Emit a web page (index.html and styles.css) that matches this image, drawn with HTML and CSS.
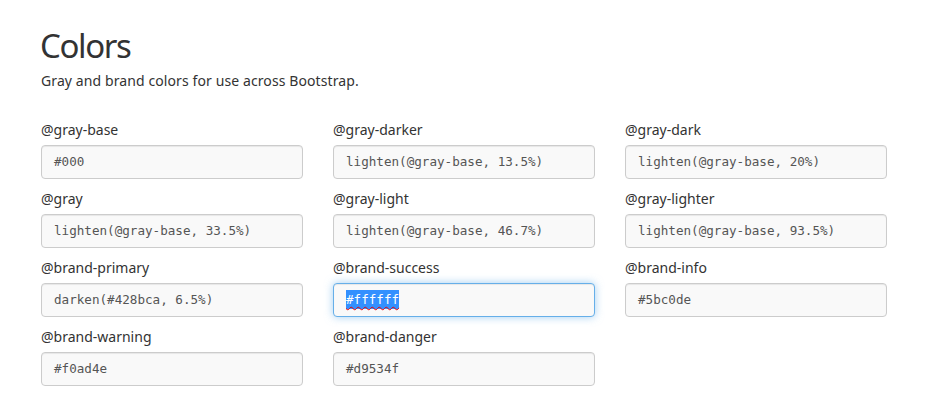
FILE: index.html
```html
<!DOCTYPE html>
<html>
<head>
<meta charset="utf-8">
<link rel="stylesheet" href="styles.css">
</head>
<body>
<div class="page">
  <h1 class="title">Colors</h1>
  <p class="lead">Gray and brand colors for use across Bootstrap.</p>
  <div class="grid">
    <div class="field"><label class="label">@gray-base</label><div class="input">#000</div></div>
    <div class="field"><label class="label">@gray-darker</label><div class="input">lighten(@gray-base, 13.5%)</div></div>
    <div class="field"><label class="label">@gray-dark</label><div class="input">lighten(@gray-base, 20%)</div></div>
    <div class="field"><label class="label">@gray</label><div class="input">lighten(@gray-base, 33.5%)</div></div>
    <div class="field"><label class="label">@gray-light</label><div class="input">lighten(@gray-base, 46.7%)</div></div>
    <div class="field"><label class="label">@gray-lighter</label><div class="input">lighten(@gray-base, 93.5%)</div></div>
    <div class="field"><label class="label">@brand-primary</label><div class="input">darken(#428bca, 6.5%)</div></div>
    <div class="field"><label class="label">@brand-success</label><div class="input focus"><span class="sel">#ffffff</span></div></div>
    <div class="field"><label class="label">@brand-info</label><div class="input">#5bc0de</div></div>
    <div class="field"><label class="label">@brand-warning</label><div class="input">#f0ad4e</div></div>
    <div class="field"><label class="label">@brand-danger</label><div class="input">#d9534f</div></div>
  </div>
</div>
</body>
</html>
```

FILE: styles.css
```css
html, body {
  margin: 0;
  padding: 0;
  background: #fff;
}
body {
  font-family: "Noto Sans", "Open Sans", sans-serif;
  color: #333;
  font-size: 14px;
  line-height: 20px;
}
.page {
  padding: 0 0 0 41px;
  width: 846px;
}
.title {
  margin: 26px 0 0 -1px;
  font-size: 33px;
  letter-spacing: -1.4px;
  line-height: 40px;
  font-weight: 400;
  color: #333;
}
.lead {
  margin: 5px 0 0 0;
  font-size: 14px;
  letter-spacing: 0.1px;
  line-height: 20px;
}
.grid {
  margin-top: 29px;
  display: grid;
  grid-template-columns: repeat(3, 262px);
  column-gap: 30px;
  row-gap: 10px;
}
.field {
  display: flex;
  flex-direction: column;
}
.label {
  display: block;
  font-size: 14px;
  line-height: 20px;
  margin-bottom: 5px;
}
.input {
  box-sizing: border-box;
  height: 34px;
  padding: 0 12px;
  border: 1px solid #ccc;
  border-radius: 4px;
  background: #f9f9f9;
  box-shadow: inset 0 1px 1px rgba(0,0,0,.075);
  font-family: "DejaVu Sans Mono", "Liberation Mono", monospace;
  font-size: 12.6px;
  line-height: 32px;
  color: #555;
  white-space: nowrap;
}
.input.focus {
  border-color: #66afe9;
  box-shadow: inset 0 1px 1px rgba(0,0,0,.075), 0 0 8px rgba(102,175,233,.6);
}
.sel {
  background: #3390ff;
  color: #fff;
  padding: 2px 0;
  text-decoration: underline wavy #e00;
  text-decoration-thickness: 1px;
  text-underline-offset: 2px;
}
```
